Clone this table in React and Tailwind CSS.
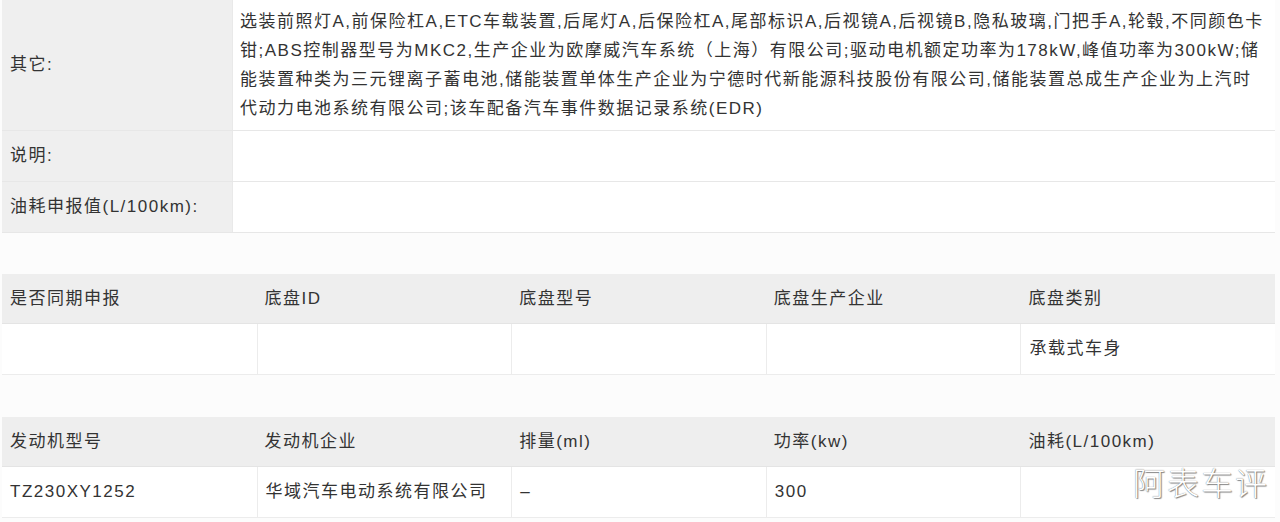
const font = "font-['Liberation_Sans','Noto_Sans_CJK_SC',sans-serif]"

const otherLines = [
  '选装前照灯A,前保险杠A,ETC车载装置,后尾灯A,后保险杠A,尾部标识A,后视镜A,后视镜B,隐私玻璃,门把手A,轮毂,不同颜色卡',
  '钳;ABS控制器型号为MKC2,生产企业为欧摩威汽车系统（上海）有限公司;驱动电机额定功率为178kW,峰值功率为300kW;储',
  '能装置种类为三元锂离子蓄电池,储能装置单体生产企业为宁德时代新能源科技股份有限公司,储能装置总成生产企业为上汽时',
  '代动力电池系统有限公司;该车配备汽车事件数据记录系统(EDR)',
]

const chassis = {
  head: ['是否同期申报', '底盘ID', '底盘型号', '底盘生产企业', '底盘类别'],
  row: ['', '', '', '', '承载式车身'],
}

const engine = {
  head: ['发动机型号', '发动机企业', '排量(ml)', '功率(kw)', '油耗(L/100km)'],
  row: ['TZ230XY1252', '华域汽车电动系统有限公司', '–', '300', ''],
}

function InfoRow({ label, children, tall }) {
  return (
    <div className="grid grid-cols-[230px_1fr] border-b border-[#e7e7e7]">
      <div className={`bg-[#efefef] flex items-center pl-2 ${tall ? 'h-[130px]' : 'h-[50px]'}`}>{label}</div>
      <div className="bg-white border-l border-[#e9e9e9] flex flex-col justify-center pl-[7px]">{children}</div>
    </div>
  )
}

function SpecTable({ data, className = '' }) {
  return (
    <div className={`w-[1273px] ml-[2px] ${className}`}>
      <div className="grid grid-cols-5 bg-[#eeeeee] h-[50px] border-b border-[#e4e4e4]">
        {data.head.map(h => (
          <div key={h} className="flex items-center pl-2">{h}</div>
        ))}
      </div>
      <div className="grid grid-cols-5 bg-white h-[51px] border-b border-[#ececec]">
        {data.row.map((c, i) => (
          <div key={i} className={`flex items-center pl-2 ${i > 0 ? 'border-l border-[#ececec]' : ''}`}>{c}</div>
        ))}
      </div>
    </div>
  )
}

export default function App() {
  return (
    <div className={`relative w-[1280px] h-[522px] overflow-hidden bg-[#fcfcfc] text-[#333] text-[17px] tracking-[1.5px] ${font}`}>
      {/* basic info */}
      <div className="w-[1273px] ml-[2px]">
        <InfoRow label="其它:" tall>
          {otherLines.map((l, i) => (
            <div key={i} className="whitespace-nowrap leading-[29px]">{l}</div>
          ))}
        </InfoRow>
        <InfoRow label="说明:" />
        <InfoRow label="油耗申报值(L/100km):" />
      </div>

      <SpecTable data={chassis} className="mt-[41px]" />
      <SpecTable data={engine} className="mt-[42px]" />

      {/* watermark */}
      <div className="absolute left-[1133px] top-[465px] text-[32px] leading-none tracking-[2px] text-white font-['Noto_Sans_CJK_SC',sans-serif] font-light [text-shadow:0_0_1px_#666,1px_1px_1px_#888]">
        阿表车评
      </div>
    </div>
  )
}
